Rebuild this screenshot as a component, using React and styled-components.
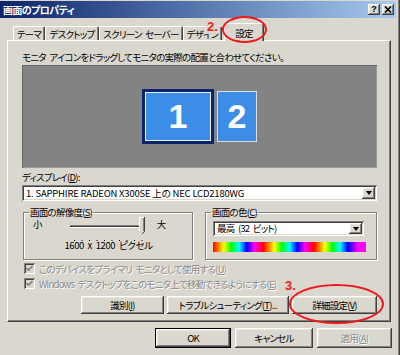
import styled, { createGlobalStyle } from "styled-components";

const face = "#dad7cf";

const Global = createGlobalStyle`
  html, body { margin: 0; padding: 0; background: ${face}; }
  body {
    font-family: "Noto Sans CJK JP", "Liberation Sans", sans-serif;
    font-size: 9.5px;
    letter-spacing: -0.75px;
    word-spacing: 2px;
    font-feature-settings: "palt";
    color: #000;
  }
`;

const raised = `
  box-shadow: inset -1px -1px #404040, inset 1px 1px #fff,
    inset -2px -2px #808080, inset 2px 2px #e8e6e0;
`;

const sunken = `
  box-shadow: inset 1px 1px #808080, inset -1px -1px #fff,
    inset 2px 2px #404040, inset -2px -2px ${face};
`;

const Window = styled.div`
  width: 400px;
  height: 355px;
  box-sizing: border-box;
  background: ${face};
  position: relative;
  overflow: hidden;
  padding-top: 1px;
  display: flex;
  flex-direction: column;
  box-shadow: inset -1px 0 #404040, inset -2px 0 #808080;
`;

const TitleBar = styled.div`
  height: 17px;
  margin-right: 4px;
  padding: 0 2px 0 3px;
  background: linear-gradient(to right, #0a246a, #a6caf0);
  display: flex;
  align-items: center;
  justify-content: space-between;
`;

const TitleText = styled.span`
  color: #fff;
  font-weight: bold;
  font-size: 10px;
  letter-spacing: -0.6px;
  line-height: 12px;
`;

const CaptionButtons = styled.div`
  display: flex;
  gap: 2px;
`;

const CaptionButton = styled.span`
  width: 12px;
  height: 11px;
  background: ${face};
  ${raised}
  display: flex;
  align-items: center;
  justify-content: center;
  font-family: "Liberation Sans", sans-serif;
  font-weight: bold;
  font-size: 9px;
  letter-spacing: 0;
  line-height: 9px;
`;

const Body = styled.div`
  padding: 5px 9px 0 7px;
  display: flex;
  flex-direction: column;
`;

const TabStrip = styled.div`
  height: 17px;
  display: flex;
  align-items: flex-end;
  padding-left: 6px;
  position: relative;
  z-index: 1;
`;

const Tab = styled.div`
  width: ${p => p.$w}px;
  height: ${p => (p.$active ? 18 : 14)}px;
  margin-left: ${p => p.$ml || 0}px;
  margin-bottom: ${p => (p.$active ? -1 : 0)}px;
  box-sizing: border-box;
  background: ${face};
  border-top: 1px solid #fff;
  border-left: 1px solid #fff;
  border-right: 1px solid #404040;
  box-shadow: inset -1px 0 #808080;
  border-radius: 2px 2px 0 0;
  display: flex;
  align-items: center;
  justify-content: center;
  white-space: nowrap;
  overflow: hidden;
  line-height: 12px;
`;

const Panel = styled.div`
  border: 1px solid;
  border-color: #fff #404040 #404040 #fff;
  box-shadow: inset -1px -1px #808080;
  padding: 0 13px 7px 14px;
  display: flex;
  flex-direction: column;
`;

const Line = styled.div`
  line-height: 12px;
  height: 12px;
  margin-top: ${p => p.$mt || 0}px;
  white-space: nowrap;
`;

const Preview = styled.div`
  margin-top: 2px;
  height: 103px;
  background: #838383;
  box-shadow: inset 1px 1px #666, inset -1px -1px #9a9a9a;
  display: flex;
  align-items: center;
  justify-content: center;
  gap: 3px;
`;

const Monitor = styled.div`
  width: ${p => p.$w}px;
  height: ${p => p.$h}px;
  box-sizing: border-box;
  background: #3b8de6;
  border: ${p => (p.$selected ? "3px solid #0a246a" : "1px solid #dcdcdc")};
  box-shadow: ${p => (p.$selected ? "inset 0 0 0 1px #e8f0ff" : "none")};
  color: #fff;
  font-family: "Liberation Sans", Arial, sans-serif;
  font-weight: bold;
  font-size: 34px;
  letter-spacing: 0;
  display: flex;
  align-items: center;
  justify-content: center;
`;

const Combo = styled.div`
  width: ${p => (p.$w ? `${p.$w}px` : "auto")};
  height: ${p => p.$h}px;
  margin-top: ${p => p.$mt || 0}px;
  box-sizing: border-box;
  background: #fff;
  ${sunken}
  padding: 2px;
  display: flex;
  align-items: center;
`;

const ComboText = styled.span`
  flex: 1;
  padding-left: 2px;
  white-space: nowrap;
  line-height: 11px;
  letter-spacing: ${p => (p.$latin ? "-0.2px" : "-0.75px")};
  word-spacing: ${p => (p.$latin ? "0" : "2px")};
`;

const DropButton = styled.span`
  width: 13px;
  align-self: stretch;
  background: ${face};
  ${raised}
  display: flex;
  align-items: center;
  justify-content: center;
  &::after {
    content: "";
    border-left: 3.5px solid transparent;
    border-right: 3.5px solid transparent;
    border-top: 4px solid #000;
  }
`;

const Groups = styled.div`
  margin-top: 5px;
  margin-left: 1px;
  display: grid;
  grid-template-columns: 170px 172px;
  column-gap: 12px;
`;

const Group = styled.fieldset`
  margin: 0;
  height: 54px;
  box-sizing: border-box;
  min-width: 0;
  padding: ${p => p.$pad};
  border: 1px solid #808080;
  box-shadow: inset 1px 1px #fff, 1px 1px #fff;
`;

const Legend = styled.legend`
  padding: 0 1px;
  margin-left: ${p => p.$ml}px;
  line-height: 12px;
`;

const SliderRow = styled.div`
  display: flex;
  align-items: flex-start;
`;

const SideLabel = styled.span`
  line-height: 12px;
  margin-left: ${p => p.$ml}px;
`;

const SliderBox = styled.span`
  margin: -2px 0 0 24px;
  height: 28px;
`;

const Caption = styled.div`
  text-align: center;
  line-height: 12px;
  margin-top: -5px;
  padding-right: 8px;
  letter-spacing: -0.4px;
`;

const Spectrum = styled.div`
  width: 153px;
  height: 10px;
  margin-top: 6px;
  background: linear-gradient(
    to right,
    #f00 0%, #ff0 7%, #0f0 12%, #0ff 17%, #00f 22%, #f0f 27%,
    #f00 33%, #ff0 40%, #0f0 45%, #0ff 50%, #00f 55%, #f0f 60%,
    #f00 66%, #ff0 73%, #0f0 78%, #0ff 83%, #00f 88%, #f0f 95%, #f0f 100%
  );
`;

const CheckRow = styled.div`
  height: 15px;
  display: flex;
  align-items: center;
  gap: 4px;
  padding-left: 2px;
  &:first-of-type { margin-top: 1px; }
`;

const CheckBox = styled.span`
  width: 11px;
  height: 11px;
  box-sizing: border-box;
  background: ${face};
  ${sunken}
  display: flex;
  align-items: center;
  justify-content: center;
`;

const Disabled = styled.span`
  color: #8a8a8a;
  text-shadow: 1px 1px #fff;
  line-height: 12px;
  white-space: nowrap;
`;

const ButtonRow = styled.div`
  display: flex;
  justify-content: flex-end;
  gap: ${p => p.$gap}px;
  margin-top: ${p => p.$mt}px;
  margin-right: ${p => p.$mr || 0}px;
`;

const Button = styled.button`
  width: ${p => p.$w}px;
  height: ${p => p.$h}px;
  padding: 0;
  font: inherit;
  letter-spacing: inherit;
  word-spacing: inherit;
  line-height: 12px;
  background: ${face};
  border: ${p => (p.$default ? "1px solid #000" : "none")};
  ${raised}
  color: ${p => (p.disabled ? "#8a8a8a" : "#000")};
  text-shadow: ${p => (p.disabled ? "1px 1px #fff" : "none")};
  white-space: nowrap;
`;

const Ellipse = styled.div`
  position: absolute;
  z-index: 3;
  left: ${p => p.$x}px;
  top: ${p => p.$y}px;
  width: ${p => p.$w}px;
  height: ${p => p.$h}px;
  box-sizing: border-box;
  border: 2px solid #f01818;
  border-radius: 50%;
  pointer-events: none;
`;

const Mark = styled.span`
  position: absolute;
  z-index: 3;
  left: ${p => p.$x}px;
  top: ${p => p.$y}px;
  color: #f01818;
  background: ${face};
  font-family: "Liberation Sans", Arial, sans-serif;
  font-weight: bold;
  font-size: 13px;
  letter-spacing: 0;
  line-height: 14px;
  padding: 0 1px;
`;

const Slider = () => (
  <svg width="84" height="28" viewBox="0 0 84 28">
    <rect x="4" y="9" width="74" height="1" fill="#808080" />
    <rect x="4" y="10" width="74" height="1" fill="#404040" />
    <rect x="4" y="11" width="74" height="1" fill="#fff" />
    <polygon points="73,1 79,1 79,15 76,18 73,15" fill={face} />
    <polyline points="73.5,15 73.5,1.5 79,1.5" fill="none" stroke="#fff" />
    <polyline points="78.5,1 78.5,15.5 76,18" fill="none" stroke="#404040" />
    <line x1="77.5" y1="2" x2="77.5" y2="15" stroke="#808080" />
    {Array.from({ length: 10 }, (_, i) => (
      <rect key={i} x={8 + i * 7.5} y="24" width="1" height="1" fill="#000" />
    ))}
  </svg>
);

const Check = () => (
  <svg width="7" height="7" viewBox="0 0 7 7">
    <polyline points="0.5,3 2.5,5 6.5,1" fill="none" stroke="#808080" strokeWidth="1.6" />
  </svg>
);

const CloseGlyph = () => (
  <svg width="8" height="7" viewBox="0 0 8 7">
    <path d="M1 0.5 L7 6.5 M7 0.5 L1 6.5" stroke="#000" strokeWidth="1.6" />
  </svg>
);

export default function App() {
  return (
    <>
      <Global />
      <Window>
        <TitleBar>
          <TitleText>画面のプロパティ</TitleText>
          <CaptionButtons>
            <CaptionButton>?</CaptionButton>
            <CaptionButton><CloseGlyph /></CaptionButton>
          </CaptionButtons>
        </TitleBar>

        <Body>
          <TabStrip>
            <Tab $w={32}>テーマ</Tab>
            <Tab $w={54}>デスクトップ</Tab>
            <Tab $w={84}>スクリーン セーバー</Tab>
            <Tab $w={39}>デザイン</Tab>
            <Tab $w={40} $ml={2} $active>設定</Tab>
          </TabStrip>

          <Panel>
            <Line $mt={10}>モニタ アイコンをドラッグしてモニタの実際の配置と合わせてください。</Line>
            <Preview>
              <Monitor $w={72} $h={55} $selected>1</Monitor>
              <Monitor $w={40} $h={51}>2</Monitor>
            </Preview>

            <Line $mt={3}>ディスプレイ(<u>D</u>):</Line>
            <Combo $h={16} $mt={2}>
              <ComboText $latin>1. SAPPHIRE RADEON X300SE 上の NEC LCD2180WG</ComboText>
              <DropButton />
            </Combo>

            <Groups>
              <Group $pad="0 0 0 9px">
                <Legend $ml={-4}>画面の解像度(<u>S</u>)</Legend>
                <SliderRow>
                  <SideLabel $ml={0}>小</SideLabel>
                  <SliderBox><Slider /></SliderBox>
                  <SideLabel $ml={7}>大</SideLabel>
                </SliderRow>
                <Caption>1600 x 1200 ピクセル</Caption>
              </Group>
              <Group $pad="3px 0 0 7px">
                <Legend $ml={-2}>画面の色(<u>C</u>)</Legend>
                <Combo $w={151} $h={15}>
                  <ComboText>最高 (32 ビット)</ComboText>
                  <DropButton />
                </Combo>
                <Spectrum />
              </Group>
            </Groups>

            <div>
              <CheckRow>
                <CheckBox><Check /></CheckBox>
                <Disabled>このデバイスをプライマリ モニタとして使用する(<u>U</u>)</Disabled>
              </CheckRow>
              <CheckRow>
                <CheckBox><Check /></CheckBox>
                <Disabled>Windows デスクトップをこのモニタ上で移動できるようにする(<u>E</u>)</Disabled>
              </CheckRow>
            </div>

            <ButtonRow $gap={3} $mt={5}>
              <Button $w={83} $h={18}>識別(<u>I</u>)</Button>
              <Button $w={122} $h={18}>トラブルシューティング(<u>T</u>)...</Button>
              <Button $w={85} $h={18}>詳細設定(<u>V</u>)</Button>
            </ButtonRow>
          </Panel>

          <ButtonRow $gap={4} $mt={6} $mr={-1}>
            <Button $w={76} $h={20} $default>OK</Button>
            <Button $w={78} $h={20}>キャンセル</Button>
            <Button $w={75} $h={20} disabled>適用(<u>A</u>)</Button>
          </ButtonRow>
        </Body>

        <Mark $x={206} $y={20}>2.</Mark>
        <Ellipse $x={222} $y={16} $w={45} $h={27} />
        <Mark $x={284} $y={279}>3.</Mark>
        <Ellipse $x={289} $y={284} $w={95} $h={40} />
      </Window>
    </>
  );
}
